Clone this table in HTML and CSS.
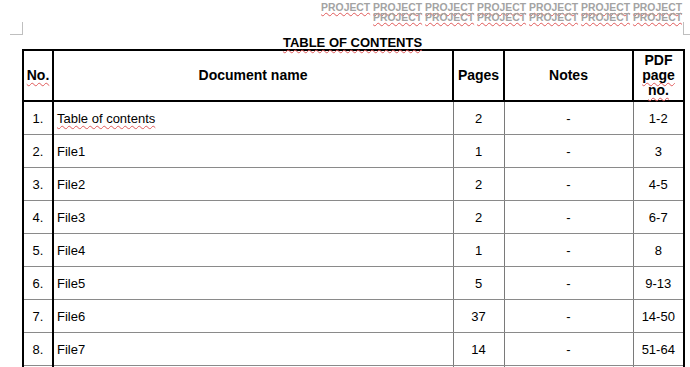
FILE: index.html
```html
<!DOCTYPE html>
<html>
<head>
<meta charset="utf-8">
<link rel="stylesheet" href="styles.css">
</head>
<body>
<div class="page">
  <span class="corner corner-left"></span>
  <span class="corner corner-right"></span>
  <div class="running-head">
    <div><span class="sp">PROJECT</span> <span class="sp">PROJECT</span> <span class="sp">PROJECT</span> <span class="sp">PROJECT</span> <span class="sp">PROJECT</span> <span class="sp">PROJECT</span> <span class="sp">PROJECT</span></div>
    <div><span class="sp">PROJECT</span> <span class="sp">PROJECT</span> <span class="sp">PROJECT</span> <span class="sp">PROJECT</span> <span class="sp">PROJECT</span> <span class="sp">PROJECT</span></div>
  </div>
  <div class="title"><span class="sp">TABLE OF CONTENTS</span></div>
  <table class="toc">
    <colgroup>
      <col class="c-no"><col class="c-name"><col class="c-pages"><col class="c-notes"><col class="c-pdf">
    </colgroup>
    <thead>
      <tr>
        <th class="no"><span class="sp">No.</span></th>
        <th>Document name</th>
        <th class="thin">Pages</th>
        <th class="thin">Notes</th>
        <th class="thin pdf">PDF<br><span class="sp">page</span><br><span class="sp">no.</span></th>
      </tr>
    </thead>
    <tbody>
      <tr><td class="no">1.</td><td class="name"><span class="sp">Table of contents</span></td><td class="thin">2</td><td class="thin">-</td><td class="thin">1-2</td></tr>
      <tr><td class="no">2.</td><td class="name">File1</td><td class="thin">1</td><td class="thin">-</td><td class="thin">3</td></tr>
      <tr><td class="no">3.</td><td class="name">File2</td><td class="thin">2</td><td class="thin">-</td><td class="thin">4-5</td></tr>
      <tr><td class="no">4.</td><td class="name">File3</td><td class="thin">2</td><td class="thin">-</td><td class="thin">6-7</td></tr>
      <tr><td class="no">5.</td><td class="name">File4</td><td class="thin">1</td><td class="thin">-</td><td class="thin">8</td></tr>
      <tr><td class="no">6.</td><td class="name">File5</td><td class="thin">5</td><td class="thin">-</td><td class="thin">9-13</td></tr>
      <tr><td class="no">7.</td><td class="name">File6</td><td class="thin">37</td><td class="thin">-</td><td class="thin">14-50</td></tr>
      <tr><td class="no">8.</td><td class="name">File7</td><td class="thin">14</td><td class="thin">-</td><td class="thin">51-64</td></tr>
      <tr><td class="no">&nbsp;</td><td class="name"></td><td class="thin"></td><td class="thin"></td><td class="thin"></td></tr>
    </tbody>
  </table>
</div>
</body>
</html>
```
FILE: styles.css
```css
html, body {
  margin: 0;
  padding: 0;
  background: #ffffff;
}
body {
  font-family: "Liberation Sans", Arial, sans-serif;
  color: #000;
  overflow: hidden;
  width: 690px;
  height: 367px;
}
.page {
  position: relative;
  padding: 2px 0 0 0;
}
.corner {
  position: absolute;
  width: 12px;
  height: 12px;
  border-color: #bfbfbf;
  border-style: solid;
  border-width: 0;
}
.corner-left {
  left: 10px;
  top: 22px;
  border-right-width: 1px;
  border-bottom-width: 1px;
}
.corner-right {
  left: 683px;
  top: 22px;
  border-left-width: 1px;
  border-bottom-width: 1px;
}
.running-head {
  text-align: right;
  padding-right: 8px;
  padding-top: 1px;
  font-size: 10.4px;
  font-weight: bold;
  line-height: 10px;
  color: #a3a3a3;
}
.running-head .sp {
  text-underline-offset: 1px;
}
.sp {
  text-decoration: underline wavy #e05a5a;
  text-decoration-thickness: 1px;
  text-underline-offset: 2px;
  text-decoration-skip-ink: none;
}
.title {
  margin-left: 22px;
  width: 661px;
  text-align: center;
  font-weight: bold;
  font-size: 13px;
  line-height: 15px;
  margin-top: 12px;
  height: 14px;
}
.toc {
  margin-left: 22px;
  width: 661px;
  border-collapse: collapse;
  table-layout: fixed;
  font-size: 13px;
}
.c-no { width: 30px; }
.c-name { width: 400px; }
.c-pages { width: 51px; }
.c-notes { width: 129px; }
.c-pdf { width: 51px; }
.toc th {
  font-weight: bold;
  font-size: 14px;
  height: 49px;
  padding: 0;
  border-top: 2px solid #000;
  border-bottom: 2px solid #000;
  border-left: 2px solid #000;
  border-right: 2px solid #000;
  text-align: center;
  vertical-align: middle;
  line-height: 15px;
}
.toc th.thin {
  border-left: 1px solid #7a7a7a;
}
.toc th.pdf {
  border-right: 2px solid #000;
}
.toc td {
  height: 32px;
  padding: 0;
  text-align: center;
  vertical-align: middle;
  border-bottom: 1px solid #8a8a8a;
  border-left: 1px solid #7a7a7a;
  line-height: 15px;
}
.toc td.no {
  border-left: 2px solid #000;
}
.toc td.name {
  text-align: left;
  padding-left: 3px;
  border-left: 2px solid #000;
}
.toc td:last-child {
  border-right: 2px solid #000;
}
```
